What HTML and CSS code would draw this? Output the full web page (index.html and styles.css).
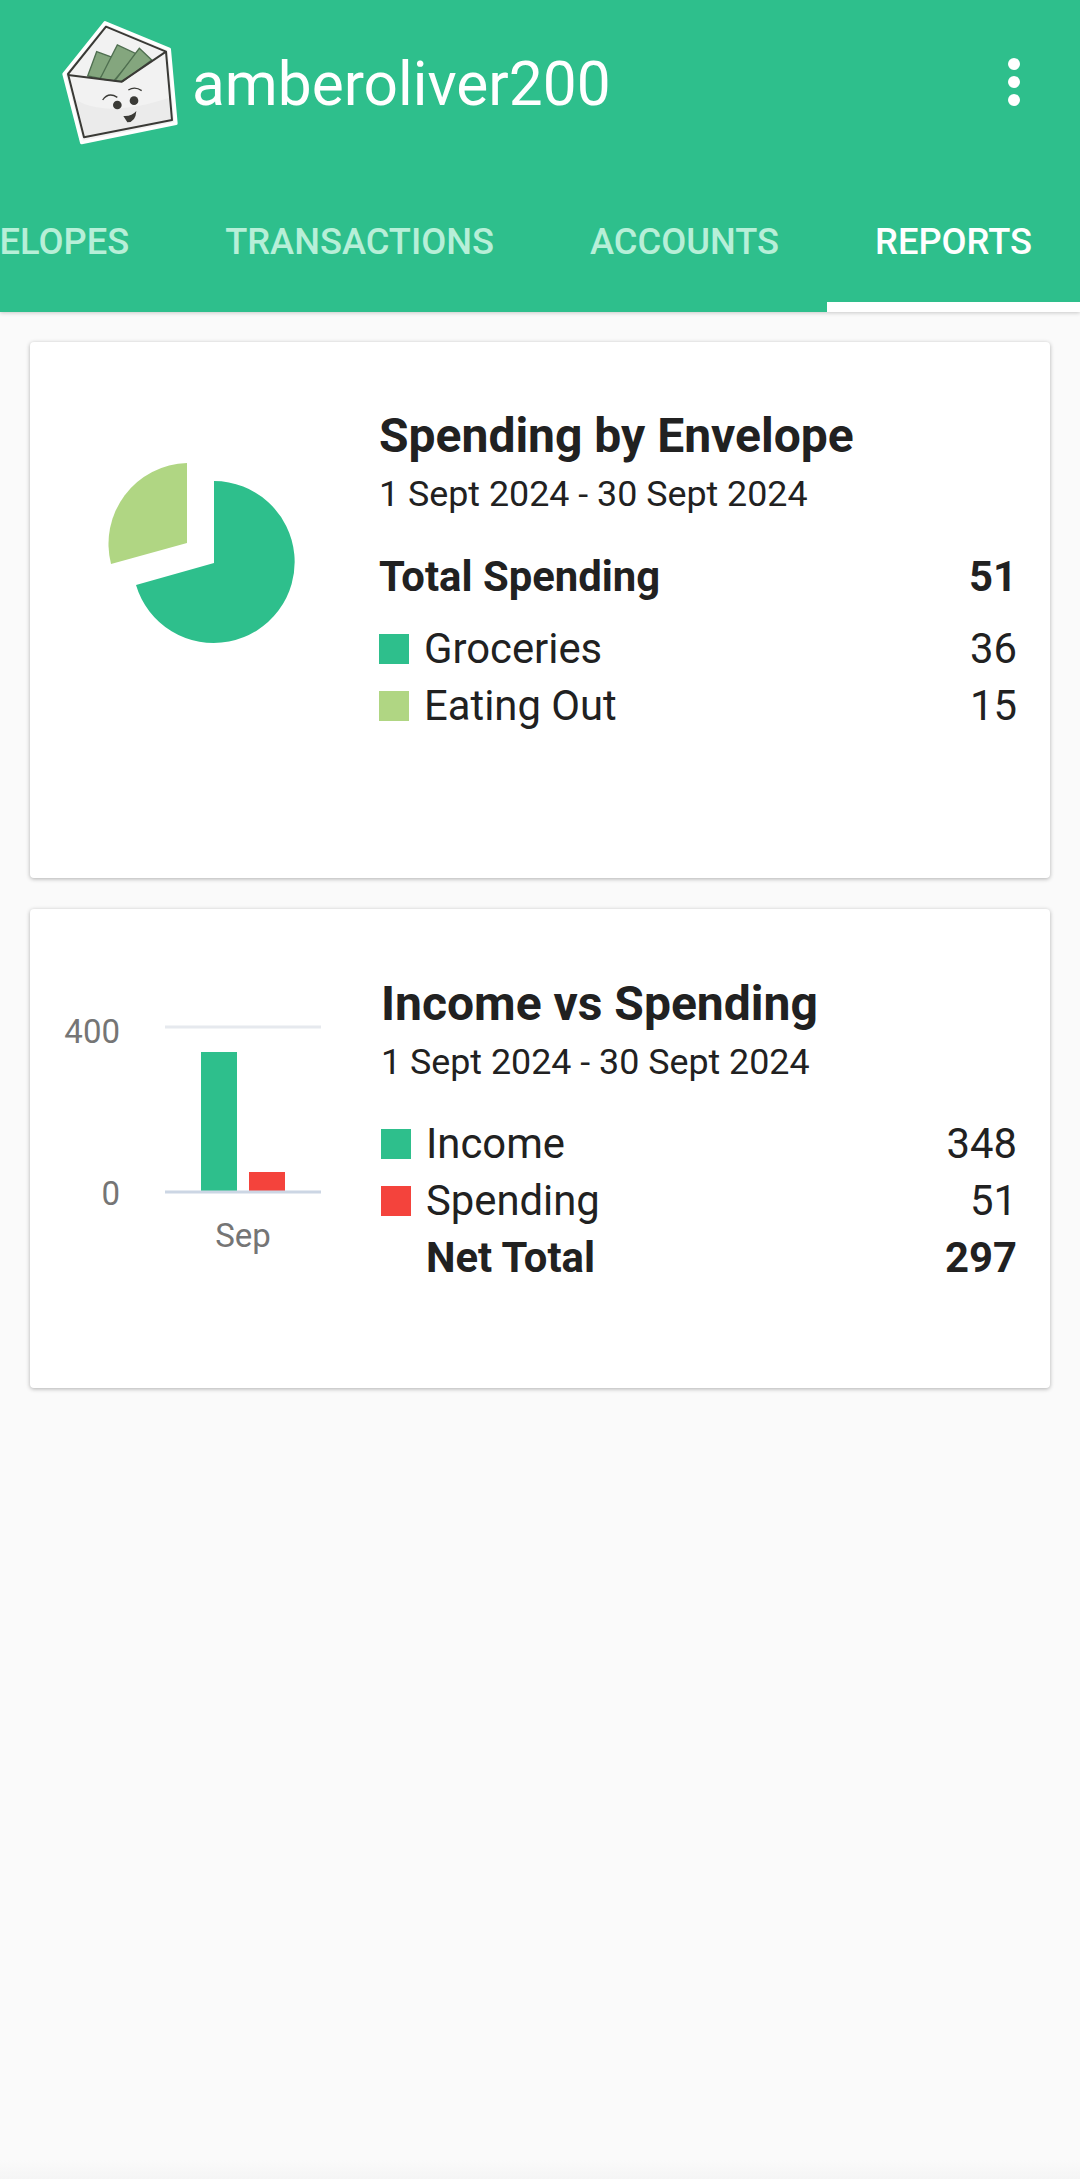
FILE: index.html
```html
<!DOCTYPE html>
<html lang="en">
<head>
  <meta charset="UTF-8">
  <meta name="viewport" content="width=device-width, initial-scale=1.0">
  <title>Reports</title>
  <link rel="stylesheet" href="styles.css">
</head>
<body>
  <header class="app-header">
    <div class="toolbar">
      <svg class="logo" viewBox="0 0 480 420" aria-label="Envelope logo">
        <path class="logo-edge" d="M72 192 L195 38 L388 118 L408 340 L125 398 Z"/>
        <path class="logo-body" d="M84 192 L198 50 L378 125 L396 330 L132 382 Z"/>
        <path class="logo-bill" d="M143 198 L170 125 L225 145 L180 205 Z"/>
        <path class="logo-bill" d="M180 207 L232 105 L290 132 L222 212 Z"/>
        <path class="logo-bill" d="M225 212 L298 115 L335 150 L248 215 Z"/>
        <path class="logo-shade" d="M96 262 Q190 330 392 262 L396 330 L132 382 Z"/>
        <path class="logo-line" d="M84 195 L245 215 L378 125"/>
        <path class="logo-line" d="M84 192 L198 50 L378 125 L396 330 L132 382 Z"/>
        <path class="logo-brow" d="M188 270 Q205 245 232 262"/>
        <path class="logo-brow" d="M265 240 Q285 228 305 242"/>
        <circle class="logo-eye" cx="232" cy="285" r="13"/>
        <circle class="logo-eye" cx="282" cy="272" r="13"/>
        <path class="logo-eye" d="M250 318 Q275 320 289 303 Q287 337 262 337 Z"/>
      </svg>
      <div class="app-title">amberoliver200</div>
      <div class="menu-dots"><span></span><span></span><span></span></div>
    </div>
    <nav class="tabs">
      <div class="tab">ENVELOPES</div>
      <div class="tab">TRANSACTIONS</div>
      <div class="tab">ACCOUNTS</div>
      <div class="tab tab-active">REPORTS</div>
    </nav>
  </header>

  <main class="reports">
    <section class="card card-spending">
      <svg class="chart" viewBox="0 0 349 340">
        <path class="fill-green" d="M184 139 A81 81 0 1 1 106 243 L184 221 Z"/>
        <path class="fill-lime" d="M157 121 A81 81 0 0 0 81 222 L157 201 Z"/>
      </svg>
      <div class="details">
        <h2 class="card-title">Spending by Envelope</h2>
        <div class="card-date">1 Sept 2024 - 30 Sept 2024</div>
        <div class="row row-total"><span>Total Spending</span><span>51</span></div>
        <div class="row"><span class="row-label"><i class="swatch bg-green"></i>Groceries</span><span>36</span></div>
        <div class="row"><span class="row-label"><i class="swatch bg-lime"></i>Eating Out</span><span>15</span></div>
      </div>
    </section>

    <section class="card card-income">
      <svg class="chart" viewBox="0 0 351 370">
        <line class="grid" x1="135" y1="118" x2="291" y2="118"/>
        <rect class="fill-green" x="171" y="143" width="36" height="139"/>
        <rect class="fill-red" x="219" y="263" width="36" height="19"/>
        <line class="axis" x1="135" y1="283" x2="291" y2="283"/>
        <text class="tick" x="90" y="134" text-anchor="end">400</text>
        <text class="tick" x="90" y="296" text-anchor="end">0</text>
        <text class="tick" x="213" y="338" text-anchor="middle">Sep</text>
      </svg>
      <div class="details">
        <h2 class="card-title">Income vs Spending</h2>
        <div class="card-date">1 Sept 2024 - 30 Sept 2024</div>
        <div class="row row-first"><span class="row-label"><i class="swatch bg-green"></i>Income</span><span>348</span></div>
        <div class="row"><span class="row-label"><i class="swatch bg-red"></i>Spending</span><span>51</span></div>
        <div class="row row-net"><span class="row-label"><i class="swatch"></i>Net Total</span><span>297</span></div>
      </div>
    </section>
  </main>
</body>
</html>
```

FILE: styles.css
```css
:root {
  --green: #2ebf8c;
  --lime: #b0d683;
  --red: #f4433c;
  --text-dark: #212121;
}

* {
  box-sizing: border-box;
}

html, body {
  height: 100%;
}

body {
  margin: 0;
  font-family: Roboto, sans-serif;
  color: var(--text-dark);
  background: linear-gradient(to bottom, #fafafa 2160px, #f5f5f5 2179px);
  overflow: hidden;
}

.app-header {
  height: 312px;
  background-color: var(--green);
  box-shadow: 0 1px 4px rgba(0, 0, 0, 0.2);
  display: flex;
  flex-direction: column;
}

.toolbar {
  display: flex;
  align-items: flex-start;
  height: 190px;
  padding: 10px 0 0 40px;
}

.logo {
  width: 160px;
  height: 140px;
  flex: none;
}

.logo-edge {
  fill: #f2f2f2;
  stroke: #fff;
  stroke-width: 10;
  stroke-linejoin: round;
}

.logo-body {
  fill: #f2f2f2;
}

.logo-shade {
  fill: #ebebeb;
}

.logo-bill {
  fill: #84a67e;
  stroke: #4f6f50;
  stroke-width: 4;
}

.logo-line {
  fill: none;
  stroke: #3a3a36;
  stroke-width: 6;
  stroke-linejoin: round;
}

.logo-brow {
  fill: none;
  stroke: #3a3a36;
  stroke-width: 4;
}

.logo-eye {
  fill: #3a3a36;
}

.app-title {
  margin: 40px 0 0 -8px;
  font-size: 60.4px;
  line-height: 70px;
  color: #fff;
}

.menu-dots {
  margin: 48px 0 0 auto;
  padding-right: 60px;
  display: flex;
  flex-direction: column;
  gap: 6px;
}

.menu-dots span {
  width: 12px;
  height: 12px;
  border-radius: 50%;
  background-color: #fff;
}

.tabs {
  display: flex;
  justify-content: flex-end;
  height: 122px;
  overflow: hidden;
}

.tab {
  flex: none;
  padding: 31px 48px 0;
  font-size: 36.3px;
  line-height: 42px;
  font-weight: 500;
  color: #b7efd8;
}

.tab-active {
  color: #fff;
  border-bottom: 10px solid #fff;
}

.reports {
  padding: 30px 30px 0;
  display: flex;
  flex-direction: column;
  gap: 31px;
}

.card {
  display: flex;
  align-items: flex-start;
  background-color: #fff;
  border-radius: 4px;
  box-shadow: 0 1px 4px rgba(0, 0, 0, 0.3);
  overflow: hidden;
}

.card-spending {
  height: 536px;
}

.card-income {
  height: 479px;
}

.chart {
  flex: none;
  width: 349px;
  height: 340px;
}

.card-income .chart {
  width: 351px;
  height: 370px;
}

.tick {
  font-size: 33px;
  fill: #757575;
}

.grid {
  stroke: #e6e9ee;
  stroke-width: 3;
}

.axis {
  stroke: #ccd6e4;
  stroke-width: 3;
}

.fill-green {
  fill: var(--green);
}

.fill-lime {
  fill: var(--lime);
}

.fill-red {
  fill: var(--red);
}

.details {
  flex: 1;
  padding: 66px 33px 0 0;
}

.card-income .details {
  padding-top: 67px;
}

.card-title {
  margin: 0;
  font-size: 48px;
  line-height: 56px;
  font-weight: 700;
}

.card-date {
  margin-top: 9px;
  font-size: 35.8px;
  line-height: 42px;
}

.row {
  display: flex;
  justify-content: space-between;
  font-size: 41.8px;
  line-height: 57px;
}

.row-total {
  margin-top: 33px;
  margin-bottom: 15px;
  font-weight: 700;
}

.row-first {
  margin-top: 32px;
}

.row-net {
  font-weight: 700;
}

.row-label {
  display: flex;
  align-items: center;
}

.swatch {
  width: 30px;
  height: 30px;
  margin-right: 15px;
}

.bg-green {
  background-color: var(--green);
}

.bg-lime {
  background-color: var(--lime);
}

.bg-red {
  background-color: var(--red);
}
```
